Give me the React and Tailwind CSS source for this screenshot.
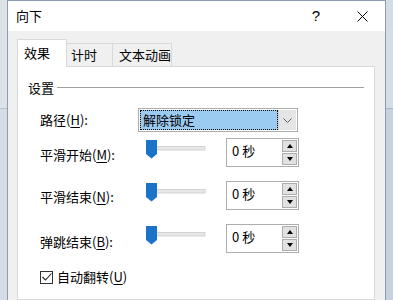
import React from 'react';

const FONT = { fontFamily: '"Noto Sans CJK SC", "Noto Sans", sans-serif' };

function U({ children }) {
  return <span className="underline underline-offset-2">{children}</span>;
}

function Slider() {
  return (
    <svg width="88" height="22" className="mt-[2px] shrink-0" viewBox="0 0 88 22">
      <rect x="10" y="6.5" width="57" height="3.5" fill="#e7e7e7" stroke="#d3d3d3" strokeWidth="1" />
      <path d="M8 0 H19 V14 L13.5 18.5 L8 14 Z" fill="#1b72c9" />
    </svg>
  );
}

function SpinBox() {
  return (
    <div className="w-[73px] h-[29px] shrink-0 border border-[#adadad] bg-white flex">
      <div className="flex-1 pl-[5px] pt-[3px] text-[13px] leading-[18px]">0 秒</div>
      <div className="flex flex-col pt-[1px] pr-[1px] gap-[1px]">
        <div className="w-[15px] h-[12px] border border-[#adadad] bg-[#e1e1e1] flex items-center justify-center">
          <svg width="6" height="4" viewBox="0 0 6 4"><path d="M0 4 L3 0 L6 4 Z" fill="#000" /></svg>
        </div>
        <div className="w-[15px] h-[12px] border border-[#adadad] bg-[#e1e1e1] flex items-center justify-center">
          <svg width="6" height="4" viewBox="0 0 6 4"><path d="M0 0 L3 4 L6 0 Z" fill="#000" /></svg>
        </div>
      </div>
    </div>
  );
}

function SliderRow({ label, mt, labelMt }) {
  return (
    <div className={`flex items-start ${mt}`}>
      <div className={`w-[98px] shrink-0 text-[13px] leading-[18px] ${labelMt}`}>{label}</div>
      <Slider />
      <SpinBox />
    </div>
  );
}

export default function App() {
  return (
    <div className="w-[393px] h-[300px] overflow-hidden flex bg-[#dadfe6] text-black" style={FONT}>
      {/* desktop strip left */}
      <div className="w-[7px] shrink-0 flex flex-col">
        <div className="h-[108px] bg-[#dde2e9]" />
        <div className="h-px bg-[#b9c2ce]" />
        <div className="flex-1 bg-[#d6dce5]" />
      </div>

      {/* dialog window */}
      <div className="w-[379px] shrink-0 flex flex-col border-l border-r border-t border-[#8c9db3] bg-[#f0f0f0]">
        <div className="h-[30px] bg-white flex items-center">
          <div className="flex-1 pl-[8px] text-[13px]">向下</div>
          <div className="w-[46px] text-center text-[15px]" style={{ fontFamily: '"Liberation Sans", sans-serif' }}>?</div>
          <div className="w-[46px] flex justify-center">
            <svg width="11" height="11" viewBox="0 0 11 11">
              <path d="M0.5 0.5 L10.5 10.5 M10.5 0.5 L0.5 10.5" stroke="#000" strokeWidth="1" />
            </svg>
          </div>
        </div>

        <div className="flex-1 flex flex-col pt-[8px] pl-[9px] pr-[10px]">
          {/* tabs */}
          <div className="flex items-end h-[27px] text-[13px]">
            <div className="w-[50px] h-[28px] -mb-px relative z-10 bg-white border border-b-0 border-[#d9d9d9] pl-[6px] pt-[4px] leading-[18px]">效果</div>
            <div className="w-[46px] h-[23px] bg-[#f0f0f0] border-t border-r border-[#d9d9d9] pl-[4px] pt-[2px] leading-[18px]">计时</div>
            <div className="w-[59px] h-[23px] bg-[#f0f0f0] border-t border-r border-[#d9d9d9] pl-[6px] pt-[2px] leading-[18px]">文本动画</div>
          </div>

          {/* tab panel */}
          <div className="flex-1 bg-white border border-[#d9d9d9] pl-[10px] pr-[10px]">
            <div className="mt-[12px] flex items-center text-[13px] leading-[18px]">
              <span>设置</span>
              <div className="flex-1 h-px bg-[#a0a0a0] ml-[3px] mt-[-1px]" />
            </div>

            <div className="pl-[12px]">
              <div className="mt-[11px] flex items-center h-[24px]">
                <div className="w-[98px] shrink-0 text-[13px] leading-[18px]">路径(<U>H</U>):</div>
                <div className="w-[160px] h-[24px] border border-[#adadad] bg-white flex p-px">
                  <div className="flex-1 bg-[#9ccbf1] border border-dotted border-black flex items-center pl-[2px] text-[13px] leading-[18px]">
                    解除锁定
                  </div>
                  <div className="w-[18px] bg-[#e5e5e5] border-l border-[#cfcfcf] flex items-center justify-center">
                    <svg width="9" height="5" viewBox="0 0 9 5">
                      <path d="M0.5 0.5 L4.5 4.5 L8.5 0.5" stroke="#606060" strokeWidth="1" fill="none" />
                    </svg>
                  </div>
                </div>
              </div>

              <SliderRow label={<>平滑开始(<U>M</U>):</>} mt="mt-[6px]" labelMt="mt-[8px]" />
              <SliderRow label={<>平滑结束(<U>N</U>):</>} mt="mt-[14px]" labelMt="mt-[7px]" />
              <SliderRow label={<>弹跳结束(<U>B</U>):</>} mt="mt-[14px]" labelMt="mt-[9px]" />

              <div className="mt-[15px] flex items-center h-[18px] text-[13px] leading-[18px]">
                <div className="w-[13px] h-[13px] border border-[#333] bg-white flex items-center justify-center">
                  <svg width="10" height="8" viewBox="0 0 10 8">
                    <path d="M0.5 4 L3.5 7 L9.5 0.5" stroke="#222" strokeWidth="1.1" fill="none" />
                  </svg>
                </div>
                <span className="ml-[4px]">自动翻转(<U>U</U>)</span>
              </div>
            </div>
          </div>
        </div>
      </div>

      {/* desktop strip right */}
      <div className="w-[7px] shrink-0 flex flex-col">
        <div className="h-[108px] bg-[#d4dce6]" />
        <div className="h-px bg-[#aab6c4]" />
        <div className="flex-1 bg-[#c8d2de]" />
      </div>
    </div>
  );
}
